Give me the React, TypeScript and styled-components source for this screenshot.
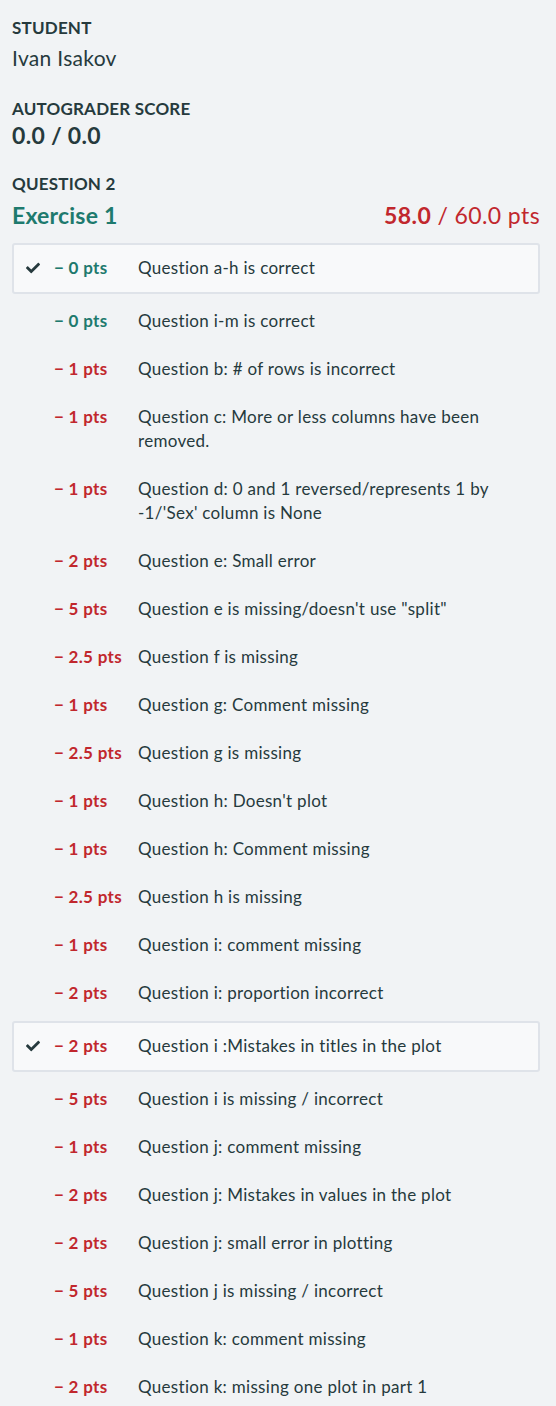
import React from "react";
import styled, { createGlobalStyle } from "styled-components";
import { FaCheck } from "react-icons/fa";

const FONT = `Lato, "Noto Sans", "Liberation Sans", sans-serif`;

const Global = createGlobalStyle`
  html, body { margin: 0; padding: 0; background: #f1f3f5; }
  body { font-family: ${FONT}; color: #263a3d; -webkit-font-smoothing: antialiased; }
`;

const Page = styled.div`
  padding: 16px 16px 0 12px;
  display: flex;
  flex-direction: column;
`;

const Section = styled.section<{ $gap: number }>`
  display: flex;
  flex-direction: column;
  margin-bottom: ${(p) => p.$gap}px;
`;

const Label = styled.div`
  font-size: 17px;
  font-weight: 700;
  letter-spacing: 0.2px;
  line-height: 24px;
  text-transform: uppercase;
`;

const Name = styled.div`
  font-size: 21px;
  letter-spacing: 0.3px;
  line-height: 30px;
  margin-top: 3px;
`;

const Score = styled.div`
  font-size: 23px;
  font-weight: 700;
  letter-spacing: 0.3px;
  line-height: 28px;
`;

const QuestionHead = styled.div`
  display: flex;
  justify-content: space-between;
  align-items: baseline;
  margin: 4px 0 9px;
`;

const Title = styled.div`
  font-size: 23px;
  font-weight: 700;
  letter-spacing: 0.2px;
  color: #1e7a6e;
  line-height: 30px;
`;

const Total = styled.div`
  font-size: 23px;
  letter-spacing: 0.4px;
  color: #c1272d;
  line-height: 30px;
  b { font-weight: 700; }
`;

const List = styled.ul`
  list-style: none;
  margin: 0;
  padding: 0;
  display: flex;
  flex-direction: column;
`;

const Item = styled.li<{ $selected: boolean }>`
  display: grid;
  grid-template-columns: 14px 70px 1fr;
  column-gap: 14px;
  align-items: start;
  padding: ${(p) => (p.$selected ? "11px 12px 12px" : "12px 14px")};
  margin: ${(p) => (p.$selected ? "4px 0 3px" : "0")};
  border: ${(p) => (p.$selected ? "2px solid #dfe3e9" : "none")};
  border-radius: 3px;
  background: ${(p) => (p.$selected ? "#f8f9fa" : "transparent")};
  font-size: 17px;
  letter-spacing: 0.3px;
  line-height: 24px;
`;

const Check = styled.span`
  display: flex;
  align-items: center;
  height: 24px;
  color: #263a3d;
`;

const Points = styled.span<{ $zero: boolean }>`
  font-weight: 700;
  color: ${(p) => (p.$zero ? "#1e7a6e" : "#c1272d")};
  white-space: nowrap;
`;

const Desc = styled.span`
  padding-right: 30px;
`;

type Rubric = { pts: string; text: string; selected?: boolean };

const items: Rubric[] = [
  { pts: "0", text: "Question a-h is correct", selected: true },
  { pts: "0", text: "Question i-m is correct" },
  { pts: "1", text: "Question b: # of rows is incorrect" },
  { pts: "1", text: "Question c: More or less columns have been removed." },
  { pts: "1", text: "Question d: 0 and 1 reversed/represents 1 by -1/'Sex' column is None" },
  { pts: "2", text: "Question e: Small error" },
  { pts: "5", text: "Question e is missing/doesn't use \"split\"" },
  { pts: "2.5", text: "Question f is missing" },
  { pts: "1", text: "Question g: Comment missing" },
  { pts: "2.5", text: "Question g is missing" },
  { pts: "1", text: "Question h: Doesn't plot" },
  { pts: "1", text: "Question h: Comment missing" },
  { pts: "2.5", text: "Question h is missing" },
  { pts: "1", text: "Question i: comment missing" },
  { pts: "2", text: "Question i: proportion incorrect" },
  { pts: "2", text: "Question i :Mistakes in titles in the plot", selected: true },
  { pts: "5", text: "Question i is missing / incorrect" },
  { pts: "1", text: "Question j: comment missing" },
  { pts: "2", text: "Question j: Mistakes in values in the plot" },
  { pts: "2", text: "Question j: small error in plotting" },
  { pts: "5", text: "Question j is missing / incorrect" },
  { pts: "1", text: "Question k: comment missing" },
  { pts: "2", text: "Question k: missing one plot in part 1" },
];

export default function App() {
  return (
    <>
      <Global />
      <Page>
        <Section $gap={24}>
          <Label>Student</Label>
          <Name>Ivan Isakov</Name>
        </Section>
        <Section $gap={23}>
          <Label>Autograder Score</Label>
          <Score>0.0 / 0.0</Score>
        </Section>
        <Label>Question 2</Label>
        <QuestionHead>
          <Title>Exercise 1</Title>
          <Total>
            <b>58.0</b> / 60.0 pts
          </Total>
        </QuestionHead>
        <List>
          {items.map((it, i) => (
            <Item key={i} $selected={!!it.selected}>
              <Check>{it.selected ? <FaCheck size={14} /> : null}</Check>
              <Points $zero={it.pts === "0"}>− {it.pts} pts</Points>
              <Desc>{it.text}</Desc>
            </Item>
          ))}
        </List>
      </Page>
    </>
  );
}
